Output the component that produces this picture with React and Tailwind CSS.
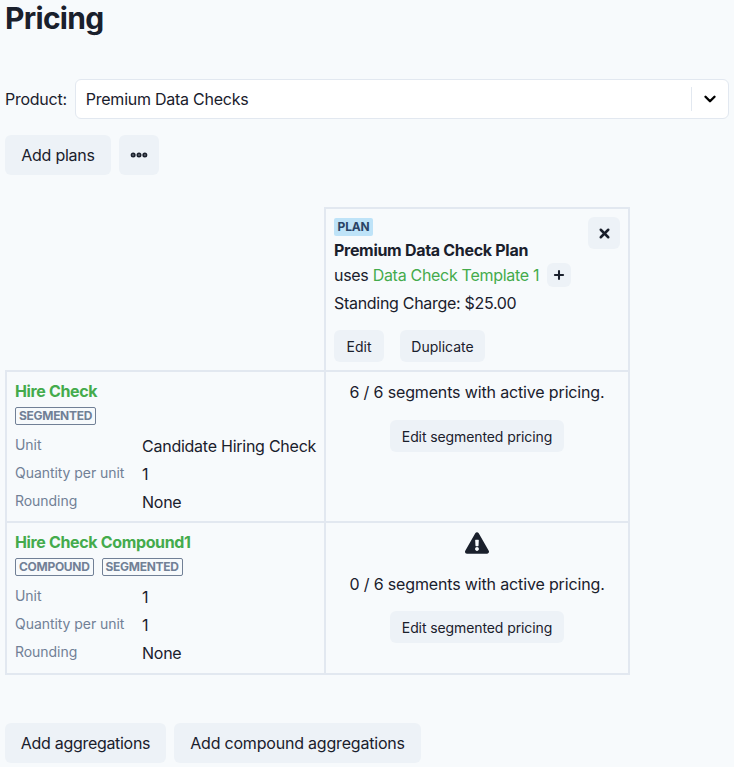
import React from 'react';
import { ChevronDown, X, Plus, MoreHorizontal } from 'lucide-react';

const Tag = ({ children }) => (
  <span className="inline-block h-[18px] rounded-[2px] border border-[#718096] px-[3px] text-[12px] leading-[16px] font-bold tracking-[-0.3px] text-[#718096]">
    {children}
  </span>
);

const Btn = ({ children, className = '' }) => (
  <button className={`rounded-md bg-[#edf2f7] font-normal text-[#1a202c] ${className}`}>{children}</button>
);

const Row = ({ label, value }) => (
  <div className="flex h-[28px]">
    <div className="w-[127px] shrink-0 pt-[3px] text-[14px] leading-[20px] tracking-[-0.05px] text-[#718096]">{label}</div>
    <div className="pt-[2px] text-[16px] leading-[24px] tracking-[-0.25px] whitespace-nowrap text-[#1a202c]">{value}</div>
  </div>
);

const ItemCell = ({ name, tags, unit, height }) => (
  <td className={`${height} border-2 border-[#e2e8f0] pt-[7px] pr-[9px] pl-[8px] align-top`}>
    <div className="text-[16px] leading-[24px] font-bold tracking-[-0.35px] text-[#44ab4c]">{name}</div>
    <div className="mt-[4px] mb-[5px] flex h-[20px] gap-[8px]">
      {tags.map((t) => <Tag key={t}>{t}</Tag>)}
    </div>
    <Row label="Unit" value={unit} />
    <Row label="Quantity per unit" value="1" />
    <Row label="Rounding" value="None" />
  </td>
);

const App = () => {
  return (
    <div className="h-[767px] overflow-hidden bg-[#f7fafc] pl-[5px] font-['Inter',sans-serif] text-[#1a202c]">
      <h1 className="h-[79px] text-[30px] leading-[36px] font-bold tracking-[-0.7px]">Pricing</h1>

      <div className="flex h-[40px] items-center pr-[5px]">
        <span className="mr-[8px] text-[16px] tracking-[-0.25px]">Product:</span>
        <div className="flex h-[40px] flex-1 items-center rounded-md border border-[#e2e8f0] bg-white pl-[10px]">
          <span className="flex-1 text-[16px] tracking-[-0.25px]">Premium Data Checks</span>
          <div className="h-[24px] w-px bg-[#e2e8f0]"></div>
          <div className="flex w-[36px] justify-center">
            <ChevronDown className="h-[18px] w-[18px] text-black" strokeWidth={3.2} />
          </div>
        </div>
      </div>

      <div className="mt-[16px] flex gap-[8px]">
        <Btn className="h-[40px] w-[106px] text-[16px] tracking-[-0.25px]">Add plans</Btn>
        <Btn className="flex h-[40px] w-[40px] items-center justify-center">
          <MoreHorizontal className="h-[20px] w-[20px] fill-current" strokeWidth={4} />
        </Btn>
      </div>

      <table className="mt-[32px] w-[623px] table-fixed border-collapse">
        <colgroup>
          <col className="w-[319px]" />
          <col className="w-[304px]" />
        </colgroup>
        <tbody>
          <tr>
            <td></td>
            <td className="relative h-[163px] border-2 border-[#e2e8f0] px-[8px] pt-[9px] align-top">
              <span className="block h-[18px] w-[39px] rounded-[2px] bg-[#bee3f8] text-center text-[12px] leading-[18px] font-bold tracking-[-0.2px] text-[#2a4365]">PLAN</span>
              <div className="mt-[2px] text-[16px] leading-[24px] font-bold tracking-[-0.3px]">Premium Data Check Plan</div>
              <div className="flex h-[26px] items-center text-[16px] tracking-[-0.3px]">
                <span>uses&nbsp;</span>
                <span className="text-[#44ab4c]">Data Check Template 1</span>
                <Btn className="ml-[8px] flex h-[24px] w-[24px] items-center justify-center">
                  <Plus className="h-[14px] w-[14px]" strokeWidth={3.5} />
                </Btn>
              </div>
              <div className="mt-[2px] text-[16px] leading-[26px] tracking-[-0.3px]">Standing Charge: $25.00</div>
              <div className="mt-[14px] flex gap-[16px]">
                <Btn className="h-[32px] w-[50px] text-[14px]">Edit</Btn>
                <Btn className="h-[32px] w-[85px] text-[14px]">Duplicate</Btn>
              </div>
              <Btn className="absolute top-[8px] right-[8px] flex h-[32px] w-[32px] items-center justify-center">
                <X className="h-[15px] w-[15px]" strokeWidth={4} />
              </Btn>
            </td>
          </tr>
          <tr>
            <ItemCell height="h-[151px]" name="Hire Check" tags={['SEGMENTED']} unit="Candidate Hiring Check" />
            <td className="border-2 border-[#e2e8f0] pt-[8px] text-center align-top">
              <div className="text-[16px] leading-[24px] tracking-[-0.15px]">6 / 6 segments with active pricing.</div>
              <Btn className="mt-[16px] h-[32px] w-[174px] text-[14px] tracking-[-0.1px]">Edit segmented pricing</Btn>
            </td>
          </tr>
          <tr>
            <ItemCell height="h-[152px]" name="Hire Check Compound1" tags={['COMPOUND', 'SEGMENTED']} unit="1" />
            <td className="border-2 border-[#e2e8f0] pt-[8px] text-center align-top">
              <svg viewBox="0 0 576 512" className="mx-auto h-[24px] w-[24px] fill-[#1a202c]">
                <path fillRule="evenodd" d="M569.5 440 329.5 24c-18.400-32-64.700-32-83.100 0L6.500 440c-18.400 31.900 4.600 72 41.600 72h479.900c36.900 0 60-40 41.500-72zM288 354c-25.400 0-46 20.600-46 46s20.600 46 46 46 46-20.600 46-46-20.600-46-46-46zm-43.700-165.300 7.400 136c.3 6.400 5.600 11.300 12 11.300h48.500c6.400 0 11.600-5 12-11.300l7.400-136c.4-6.900-5.100-12.700-12-12.700h-63.400c-6.900 0-12.400 5.800-12 12.700z" />
              </svg>
              <div className="mt-[17px] text-[16px] leading-[24px] tracking-[-0.15px]">0 / 6 segments with active pricing.</div>
              <Btn className="mt-[15px] h-[32px] w-[174px] text-[14px] tracking-[-0.1px]">Edit segmented pricing</Btn>
            </td>
          </tr>
        </tbody>
      </table>

      <div className="mt-[48px] flex gap-[8px]">
        <Btn className="h-[40px] w-[161px] text-[16px] tracking-[-0.3px]">Add aggregations</Btn>
        <Btn className="h-[40px] w-[247px] text-[16px] tracking-[-0.2px]">Add compound aggregations</Btn>
      </div>
    </div>
  );
};

export default App;
